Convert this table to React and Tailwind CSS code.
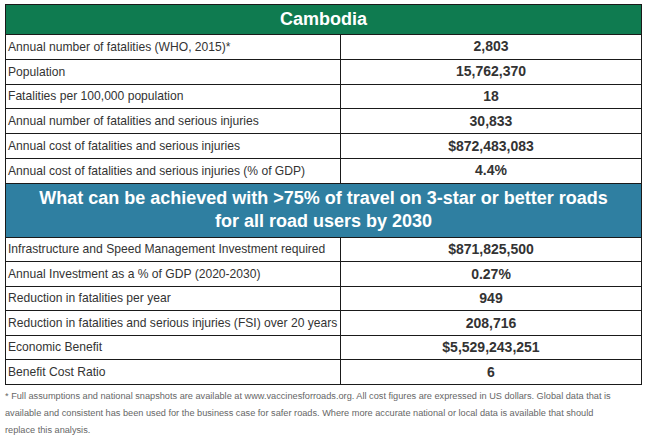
const topRows = [
  ["Annual number of fatalities (WHO, 2015)*", "2,803"],
  ["Population", "15,762,370"],
  ["Fatalities per 100,000 population", "18"],
  ["Annual number of fatalities and serious injuries", "30,833"],
  ["Annual cost of fatalities and serious injuries", "$872,483,083"],
  ["Annual cost of fatalities and serious injuries (% of GDP)", "4.4%"],
];

const bottomRows = [
  ["Infrastructure and Speed Management Investment required", "$871,825,500"],
  ["Annual Investment as a % of GDP (2020-2030)", "0.27%"],
  ["Reduction in fatalities per year", "949"],
  ["Reduction in fatalities and serious injuries (FSI) over 20 years", "208,716"],
  ["Economic Benefit", "$5,529,243,251"],
  ["Benefit Cost Ratio", "6"],
];

const Row = ({ label, value, h }) => (
  <div className={`grid grid-cols-[335px_1fr] border-t border-[#1a1a1a] ${h}`}>
    <div className="flex items-center pl-[2px] text-[12.1px] text-[#333] border-r border-[#1a1a1a]">
      {label}
    </div>
    <div className="flex items-center justify-center text-[14px] font-bold text-[#333]">
      {value}
    </div>
  </div>
);

const App = () => {
  return (
    <div className="w-[645px] h-[437px] bg-white font-['Liberation_Sans',Arial,sans-serif] pt-[4px] pl-[5px]">
      <div className="w-[637px] border border-[#1a1a1a]">
        <div className="h-[29px] bg-[#0f7b50] flex items-center justify-center text-white font-bold text-[18px]">
          Cambodia
        </div>
        {topRows.map(([l, v]) => (
          <Row key={l} label={l} value={v} h="h-[24.8px]" />
        ))}
        <div className="border-t border-[#1a1a1a] h-[54px] bg-[#2f7fa1] flex flex-col items-center justify-center text-white font-bold text-[18px] leading-[23px]">
          <span>What can be achieved with &gt;75% of travel on 3-star or better roads</span>
          <span>for all road users by 2030</span>
        </div>
        {bottomRows.map(([l, v]) => (
          <Row key={l} label={l} value={v} h="h-[24.5px]" />
        ))}
      </div>
      <div className="mt-[3px] text-[9.2px] leading-[17px] text-[#666]">
        <div>* Full assumptions and national snapshots are available at www.vaccinesforroads.org. All cost figures are expressed in US dollars. Global data that is</div>
        <div>available and consistent has been used for the business case for safer roads. Where more accurate national or local data is available that should</div>
        <div>replace this analysis.</div>
      </div>
    </div>
  );
};

export default App;
